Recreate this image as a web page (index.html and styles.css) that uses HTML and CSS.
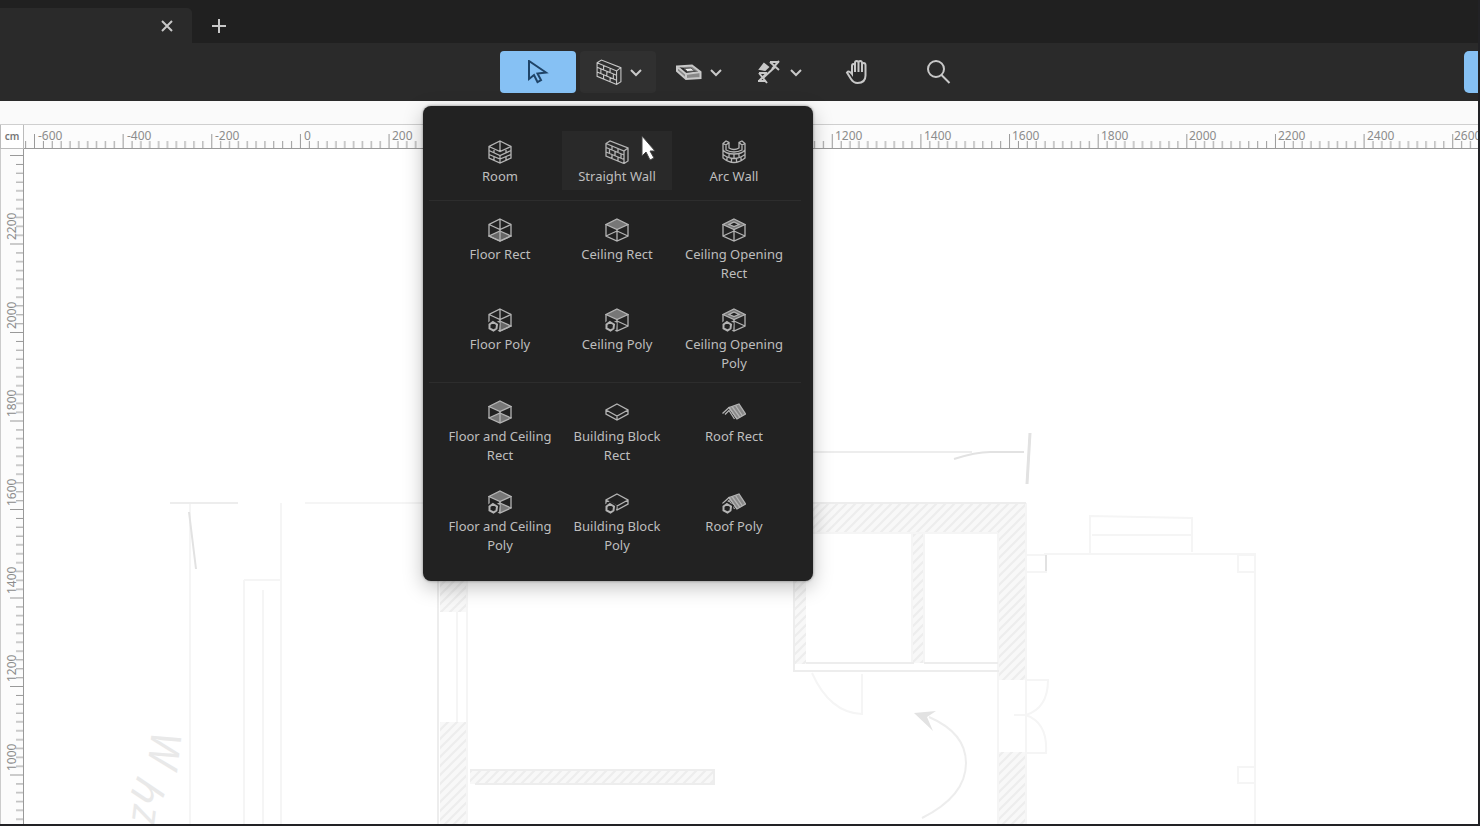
FILE: index.html
```html
<!DOCTYPE html>
<html lang="en">
<head>
<meta charset="utf-8">
<title>Floor plan editor</title>
<link rel="stylesheet" href="styles.css">
</head>
<body>
<svg class="defs" aria-hidden="true">
  <defs>
    <symbol id="poly" viewBox="0 0 24 24"><path d="M5 14 9 16.500 8.500 20.500 5.500 22.500 1.500 20.500 1.500 16.500z" fill="#222" stroke="#222" stroke-width="5"/><path d="M5 14 9 16.500 8.500 20.500 5.500 22.500 1.500 20.500 1.500 16.500z" stroke-width="2"/></symbol>
    <symbol id="floor" viewBox="0 0 24 24"><path d="M12 13 23 18 12 23 1 18z" fill="#666"/><path d="M12 1 23 6.500V18L12 23 1 18V6.500zM1 6.500 12 11.500 23 6.500M12 1v22"/></symbol>
    <symbol id="ceiling" viewBox="0 0 24 24"><path d="M12 1 23 6.500 12 11.500 1 6.500z" fill="#777"/><path d="M23 6.500V18L12 23 1 18V6.500M12 11.500V23M12 13 1 18M12 13l11 5"/></symbol>
    <symbol id="opening" viewBox="0 0 24 24"><path d="M12 1 23 6.500 12 11.500 1 6.500z" fill="#777"/><path d="M12 4 17 6.500 12 8.500 7 6.500z" fill="#222"/><path d="M23 6.500V18L12 23 1 18V6.500M12 11.500V23M12 13 1 18M12 13l11 5"/></symbol>
    <symbol id="both" viewBox="0 0 24 24"><path d="M12 1 23 6.500 12 11.500 1 6.500zM12 13 23 18 12 23 1 18z" fill="#777"/><path d="M1 6.500V18M23 6.500V18M12 11v12"/></symbol>
    <symbol id="block" viewBox="0 0 24 24"><path d="M12 4 23 10v4L12 20 1 14v-4zM1 10l11 6 11-6M12 16v4"/></symbol>
    <symbol id="roof" viewBox="0 0 24 24"><path d="M7 7.500 17 4 23.500 14 15 19z" fill="#888"/><path d="M.5 13.500 7 7.500 15 19M3 14.500 7 10.500 12.500 19M10 6.500l8 11M13.500 5.500l7 10.500"/></symbol>
    <symbol id="room" viewBox="0 0 24 24"><path d="M12 1 23 6.500V18L12 23 1 18V6.500zM12 1v10M1 6.500l11 5 11-5M1 10.500l11 5 11-5M1 14.500l11 4.500 11-4.500M6 8.500v4M18 8.500v4M12 15v4M6 16.500v4M18 16.500v4M12 19v4"/></symbol>
    <symbol id="wall" viewBox="0 0 24 24"><path d="M1 3.500 5 1 23 8v13l-4 2.500L1 16zM1 3.500 19 11l4-3M19 11v12.500M1 7.500l18 7.500M1 12l18 7.500M7 6v4M13 8.500v4M4.500 9v4.500M10 11.500V16M16 14v4.500M7 14.500v4M13 17v4"/></symbol>
    <symbol id="arc" viewBox="0 0 24 24"><path d="M1 3.500 4 1l3 1.500V8q5 3 10 0V2.500L20 1l3 2.500V18q-11 9-22 0zM1 3.500 4 5l3-2.500M23 3.500 20 5l-3-2.500M4 5v5q8 4 16 0V5M1 10q3 4 11 4t11-4M1 14.500q11 8 22 0M7 13v4M17 13v4M12 14v4M5 17v3.500M19 17v3.500M9.500 18v4M14.500 18v4"/></symbol>
    <symbol id="chevron" viewBox="0 0 12 12"><path d="M1 4l5 5 5-5"/></symbol>
  </defs>
</svg>

<header class="titlebar">
  <div class="tab">
    <button class="plain" aria-label="Close tab"><svg width="12" height="12" viewBox="0 0 12 12"><path d="M1 1l10 10M11 1 1 11"/></svg></button>
  </div>
  <button class="plain add" aria-label="New tab"><svg width="14" height="14" viewBox="0 0 14 14"><path d="M7 0v14M0 7h14"/></svg></button>
</header>

<nav class="toolbar" aria-label="Tools">
  <div class="tools">
    <button class="tool selected" aria-label="Select"><svg width="24" height="24" viewBox="0 0 24 24"><path d="M3 1v18l5-4 3.500 7 3.500-2-3.500-6.500 8.500-1z"/></svg></button>
    <div class="picker">
      <button class="tool split hover" aria-label="Walls" aria-expanded="true"><svg width="26" height="26"><use href="#wall"/></svg><svg width="12" height="12"><use href="#chevron"/></svg></button>
      <div class="menu">
        <div class="group">
          <button class="item"><svg><use href="#room"/></svg>Room</button>
          <button class="item hover"><svg><use href="#wall"/></svg>Straight Wall</button>
          <button class="item"><svg><use href="#arc"/></svg>Arc Wall</button>
        </div>
        <div class="group">
          <button class="item"><svg><use href="#floor"/></svg>Floor Rect</button>
          <button class="item"><svg><use href="#ceiling"/></svg>Ceiling Rect</button>
          <button class="item"><svg><use href="#opening"/></svg>Ceiling Opening Rect</button>
          <button class="item"><svg><use href="#floor"/><use href="#poly"/></svg>Floor Poly</button>
          <button class="item"><svg><use href="#ceiling"/><use href="#poly"/></svg>Ceiling Poly</button>
          <button class="item"><svg><use href="#opening"/><use href="#poly"/></svg>Ceiling Opening Poly</button>
        </div>
        <div class="group">
          <button class="item"><svg><use href="#both"/></svg>Floor and Ceiling Rect</button>
          <button class="item"><svg><use href="#block"/></svg>Building Block Rect</button>
          <button class="item"><svg><use href="#roof"/></svg>Roof Rect</button>
          <button class="item"><svg><use href="#both"/><use href="#poly"/></svg>Floor and Ceiling Poly</button>
          <button class="item"><svg><use href="#block"/><use href="#poly"/></svg>Building Block Poly</button>
          <button class="item"><svg><use href="#roof"/><use href="#poly"/></svg>Roof Poly</button>
        </div>
        <svg class="cursor" width="16" height="26" viewBox="0 0 16 26"><path d="M1 1v20l4-4 4 8 4-2-4-7h5z"/></svg>
      </div>
    </div>
    <button class="tool split" aria-label="Openings"><svg width="26" height="26" viewBox="0 0 26 26"><path d="M1 7.500 16 6.500 24.500 13v6L10 20 1 12zM1 7.500 10 15l14.500-2M10 15v5" fill="#888" stroke-width="2"/><path d="M8 9.500 15 9l3.500 3-7 .5z" fill="#eee" stroke="#555"/></svg><svg width="12" height="12"><use href="#chevron"/></svg></button>
    <button class="tool split" aria-label="Dimensions"><svg width="26" height="26" viewBox="0 0 26 26"><path d="M7 19 19 8M14 3l9 8M16 10l7-8M14 3h9M3 14l8 10M3 22l8-8M3 14h8M2 22h8" stroke-width="2"/><path d="M4 10 8 5l4 3-3 3z" fill="#c8c8c8" stroke-width="2"/></svg><svg width="12" height="12"><use href="#chevron"/></svg></button>
    <button class="tool" aria-label="Pan"><svg width="26" height="26" viewBox="0 0 26 26"><path d="M7 15V7q0-2 1.500-2T10 7v6V4q0-2 1.700-2T13.500 4v9V4q0-2 1.700-2T17 4v9V6q0-2 1.700-2T20.500 6v10.500q0 7.500-8 7.500-4 0-6.500-4l-4-6.500q2-2.500 5 1.500z" stroke-width="2"/></svg></button>
    <button class="tool" aria-label="Zoom"><svg width="26" height="26" viewBox="0 0 26 26"><circle cx="11" cy="10" r="8" stroke-width="2"/><path d="M16.500 16l8 8" stroke-width="2"/></svg></button>
  </div>
  <button class="action" aria-label="Panel"></button>
</nav>

<main class="workspace">
  <div class="strip"></div>
  <div class="unit">cm</div>
  <svg class="ruler-x">
    <defs>
      <pattern id="tx" x="10" width="88.64" height="24" patternUnits="userSpaceOnUse">
        <path d="M.5 9V24M9.400 16v8M18.200 16v8M27.100 16v8M36 16v8M44.800 16v8M53.700 16v8M62.500 16v8M71.400 16v8M80.300 16v8"/>
      </pattern>
    </defs>
    <rect width="100%" height="24" fill="url(#tx)"/>
    <text x="14" y="15">-600</text><text x="103" y="15">-400</text><text x="191" y="15">-200</text><text x="280" y="15">0</text><text x="368" y="15">200</text>
    <text x="811" y="15">1200</text><text x="900" y="15">1400</text><text x="988" y="15">1600</text><text x="1077" y="15">1800</text><text x="1165" y="15">2000</text><text x="1254" y="15">2200</text><text x="1343" y="15">2400</text><text x="1430" y="15">2600</text>
  </svg>
  <svg class="ruler-y">
    <defs>
      <pattern id="ty" y="6" width="24" height="88.5" patternUnits="userSpaceOnUse">
        <path d="M9 .5H24M15 9.400h9M15 18.200h9M15 27h9M15 35.900h9M15 44.700h9M15 53.600h9M15 62.500h9M15 71.300h9M15 80.200h9"/>
      </pattern>
    </defs>
    <rect width="24" height="100%" fill="url(#ty)"/>
    <g transform="rotate(-90)">
      <text x="-91" y="15">2200</text><text x="-180" y="15">2000</text><text x="-268" y="15">1800</text><text x="-357" y="15">1600</text><text x="-445" y="15">1400</text><text x="-533" y="15">1200</text><text x="-622" y="15">1000</text>
    </g>
  </svg>
  <svg class="plan">
    <defs>
      <pattern id="hatch" width="9" height="9" patternUnits="userSpaceOnUse"><rect width="9" height="9" fill="#f8f8f8" stroke="none"/><path d="M-1 10 10-1M-1 1 1-1M8 10l2-2" stroke="#ededed" stroke-width="2"/></pattern>
    </defs>
    <g transform="translate(-24 -149)">
      <g fill="url(#hatch)" stroke="none">
        <path d="M812 503h214v177h-28V533H812zM912 533h12v130h-12zM998 752h28v80h-28zM440 560h27v52h-27zM440 722h27v110h-27zM470 770h244v14H470zM794 570h12v94h-12z"/>
      </g>
      <g stroke="#f5f5f5" stroke-width="2">
        <path d="M190 503v330M244 580v250M263 590v240M281 503v330M244 580h37M305 503h120M467 580v250M457 612v110M1026 503v330M998 533v300M1090 553v-37l102 2v34M1092 535h100M1044 554h211v280M912 533v130M924 533v130M812 533h186"/>
        <path d="M812 673q18 40 50 41v-40M1026 680h22q0 28-22 35M1014 715h12q22 8 20 38h-20M1026 555h20v17h-20M1238 555h17v17h-17zM1238 767h17v16h-17z"/>
      </g>
      <g stroke="#ededed" stroke-width="2">
        <path d="M438 580v250M812 452h160M812 503h214M794 580v91h205M806 663h108M924 663h74M470 770h244v14H475M170 503h68"/>
        <path d="M922 818q44-22 44-55 0-30-37-46"/>
      </g>
      <g stroke="#e2e2e2" stroke-width="3"><path d="M1030 433l-3 51"/><path d="M954 459q24-8 40-7h30M189 512l7 57" stroke-width="2"/></g>
      <path d="M914 713l22-2-9 6 6 14z" fill="#e2e2e2" stroke="none"/>
      <path d="M1046 555v16" stroke="#e2e2e2" stroke-width="2"/>
      <text class="note" transform="translate(152 730) rotate(97)">W</text>
      <text class="note" transform="translate(138 775) rotate(112)">h</text>
      <text class="note" transform="translate(134 804) rotate(97)">z</text>
    </g>
  </svg>
</main>
</body>
</html>
```
FILE: styles.css
```css
* { box-sizing: border-box; }

body {
  margin: 0;
  height: 100vh;
  display: flex;
  flex-direction: column;
  overflow: hidden;
  background: #fff;
  border-right: 2px solid #222225;
  border-bottom: 2px solid #222225;
  font-family: "Noto Sans", "Open Sans", sans-serif;
}

svg { display: block; fill: none; stroke: #c8c8c8; }
.defs { position: absolute; width: 0; height: 0; }
button { border: 0; padding: 0; font: inherit; color: inherit; background: none; }

.titlebar {
  display: flex;
  height: 43px;
  padding-top: 8px;
  background: #202020;
}
.tab {
  display: flex;
  align-items: center;
  justify-content: flex-end;
  width: 192px;
  padding-right: 19px;
  border-top-right-radius: 5px;
  background: #2a2a2a;
}
.plain svg { stroke-width: 2; }
.add { margin-left: 20px; }

.toolbar {
  display: grid;
  grid-template-columns: 1fr auto 1fr;
  align-items: center;
  height: 58px;
  background: #2a2a2a;
}
.tools { grid-column: 2; display: flex; gap: 4px; margin-right: 2px; }
.tool {
  display: flex;
  align-items: center;
  justify-content: center;
  width: 76px;
  height: 42px;
  border-radius: 4px;
}
.split { gap: 8px; padding-left: 2px; }
.split svg:last-child { stroke-width: 2; }
.tool.hover { background: #303030; }
.tool.selected { background: #86c1f4; }
.selected svg { stroke: #1f4468; stroke-width: 2; }
.action {
  justify-self: end;
  width: 14px;
  height: 42px;
  border-radius: 5px 0 0 5px;
  background: #86c1f4;
}

.picker { position: relative; }
.menu {
  position: absolute;
  z-index: 2;
  top: 55px;
  left: 50%;
  transform: translateX(-50%);
  width: 390px;
  padding: 17px 0 22px;
  border-radius: 8px;
  background: #222;
  box-shadow: 0 6px 20px rgba(0, 0, 0, .25), 0 0 3px rgba(0, 0, 0, .4);
}
.group {
  display: grid;
  grid-template-columns: repeat(3, 110px);
  gap: 12px 7px;
  margin: 0 12px 0 6px;
  padding: 8px 0 5px 16px;
}
.group + .group { border-top: 1px solid #2d2d2d; }
.group:first-child { padding-bottom: 10px; }
.group:last-of-type { padding-bottom: 0; }
.item {
  display: flex;
  flex-direction: column;
  align-items: center;
  gap: 3px;
  padding: 9px 0 4px;
  color: #bebebe;
  font-size: 13px;
  line-height: 19px;
}
.item.hover { background: #292929; }
.item svg { width: 24px; height: 24px; stroke: #b4b4b4; stroke-width: 1.3; }
.cursor { position: absolute; top: 29px; left: 218px; }
.cursor path { fill: #fff; stroke: #444; }

.workspace {
  flex: 1;
  display: grid;
  grid-template: 24px 24px 1fr / 24px 1fr;
  min-height: 0;
}
.strip {
  grid-column: 1 / -1;
  border-bottom: 1px solid #cfcfcf;
  background: #fafafa;
}
.unit {
  border: 1px solid #bbb;
  border-top: 0;
  color: #777;
  font-size: 10px;
  font-weight: 600;
  line-height: 23px;
  text-align: center;
}
.ruler-x, .ruler-y { width: 100%; height: 100%; background: #fcfcfc; stroke: #999; }
.ruler-x rect, .ruler-y rect { stroke: none; }
.ruler-x { border-bottom: 1px solid #999; }
.ruler-y { border-left: 1px solid #ccc; border-right: 1px solid #999; }
.ruler-x text, .ruler-y text { font-size: 12px; fill: #8c8c8c; stroke: none; }
.plan { width: 100%; height: 100%; }
.note { font-size: 42px; font-style: italic; fill: #e9e9e9; stroke: none; }
```
